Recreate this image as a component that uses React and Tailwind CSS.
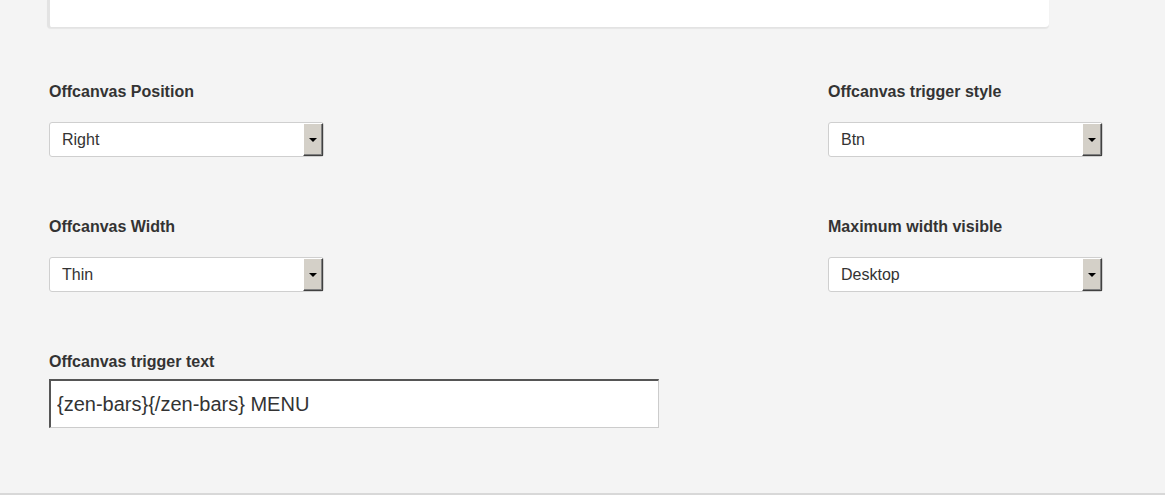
import React from 'react'

// Classic Windows-style dropdown box
const FakeSelect = ({ value }) => (
    <div className="flex h-[35px] w-[275px] items-center justify-between rounded-[3px] border border-[#cfcfcf] bg-white">
        <span className="pl-[12px] text-[16px] leading-none text-[#333]">{value}</span>
        <span className="flex h-[33px] w-[20px] items-center justify-center border border-t-white border-l-white border-r-[#404040] border-b-[#404040] bg-[#d4d0c8] shadow-[inset_-1px_-1px_0_#808080]">
            <svg width="8" height="4" viewBox="0 0 8 4" className="mt-[1px]">
                <path d="M0 0H8L4 4Z" fill="#000" />
            </svg>
        </span>
    </div>
);

const Field = ({ label, children, gap = 'mt-[21px]' }) => (
    <div className="flex flex-col">
        <label className="text-[16px] font-bold leading-[18px] text-[#333]">{label}</label>
        <div className={gap}>{children}</div>
    </div>
);

const App = () => {
    return (
        <div className="flex h-[495px] flex-col border-b-2 border-[#d8d8d8] bg-[#f4f4f4] font-['Liberation_Sans',Arial,sans-serif]">
            {/* end of the panel above */}
            <div className="ml-[47px] h-[28px] w-[1002px] rounded-b-[4px] border-l-[3px] border-b border-[#e3e3e3] bg-white shadow-[0_1px_1px_rgba(0,0,0,0.06)]" />

            <div className="mt-[55px] grid grid-cols-[779px_1fr] gap-y-[61px] pl-[49px]">
                <Field label="Offcanvas Position">
                    <FakeSelect value="Right" />
                </Field>
                <Field label="Offcanvas trigger style">
                    <FakeSelect value="Btn" />
                </Field>
                <Field label="Offcanvas Width">
                    <FakeSelect value="Thin" />
                </Field>
                <Field label="Maximum width visible">
                    <FakeSelect value="Desktop" />
                </Field>
                <Field label="Offcanvas trigger text" gap="mt-[8px]">
                    <input
                        readOnly
                        defaultValue="{zen-bars}{/zen-bars} MENU"
                        className="h-[49px] w-[610px] border-t-2 border-l-2 border-r border-b border-t-[#555] border-l-[#555] border-r-[#ccc] border-b-[#ccc] bg-white pl-[6px] text-[20px] text-[#333] outline-none"
                    />
                </Field>
            </div>
        </div>
    );
};

export default App
